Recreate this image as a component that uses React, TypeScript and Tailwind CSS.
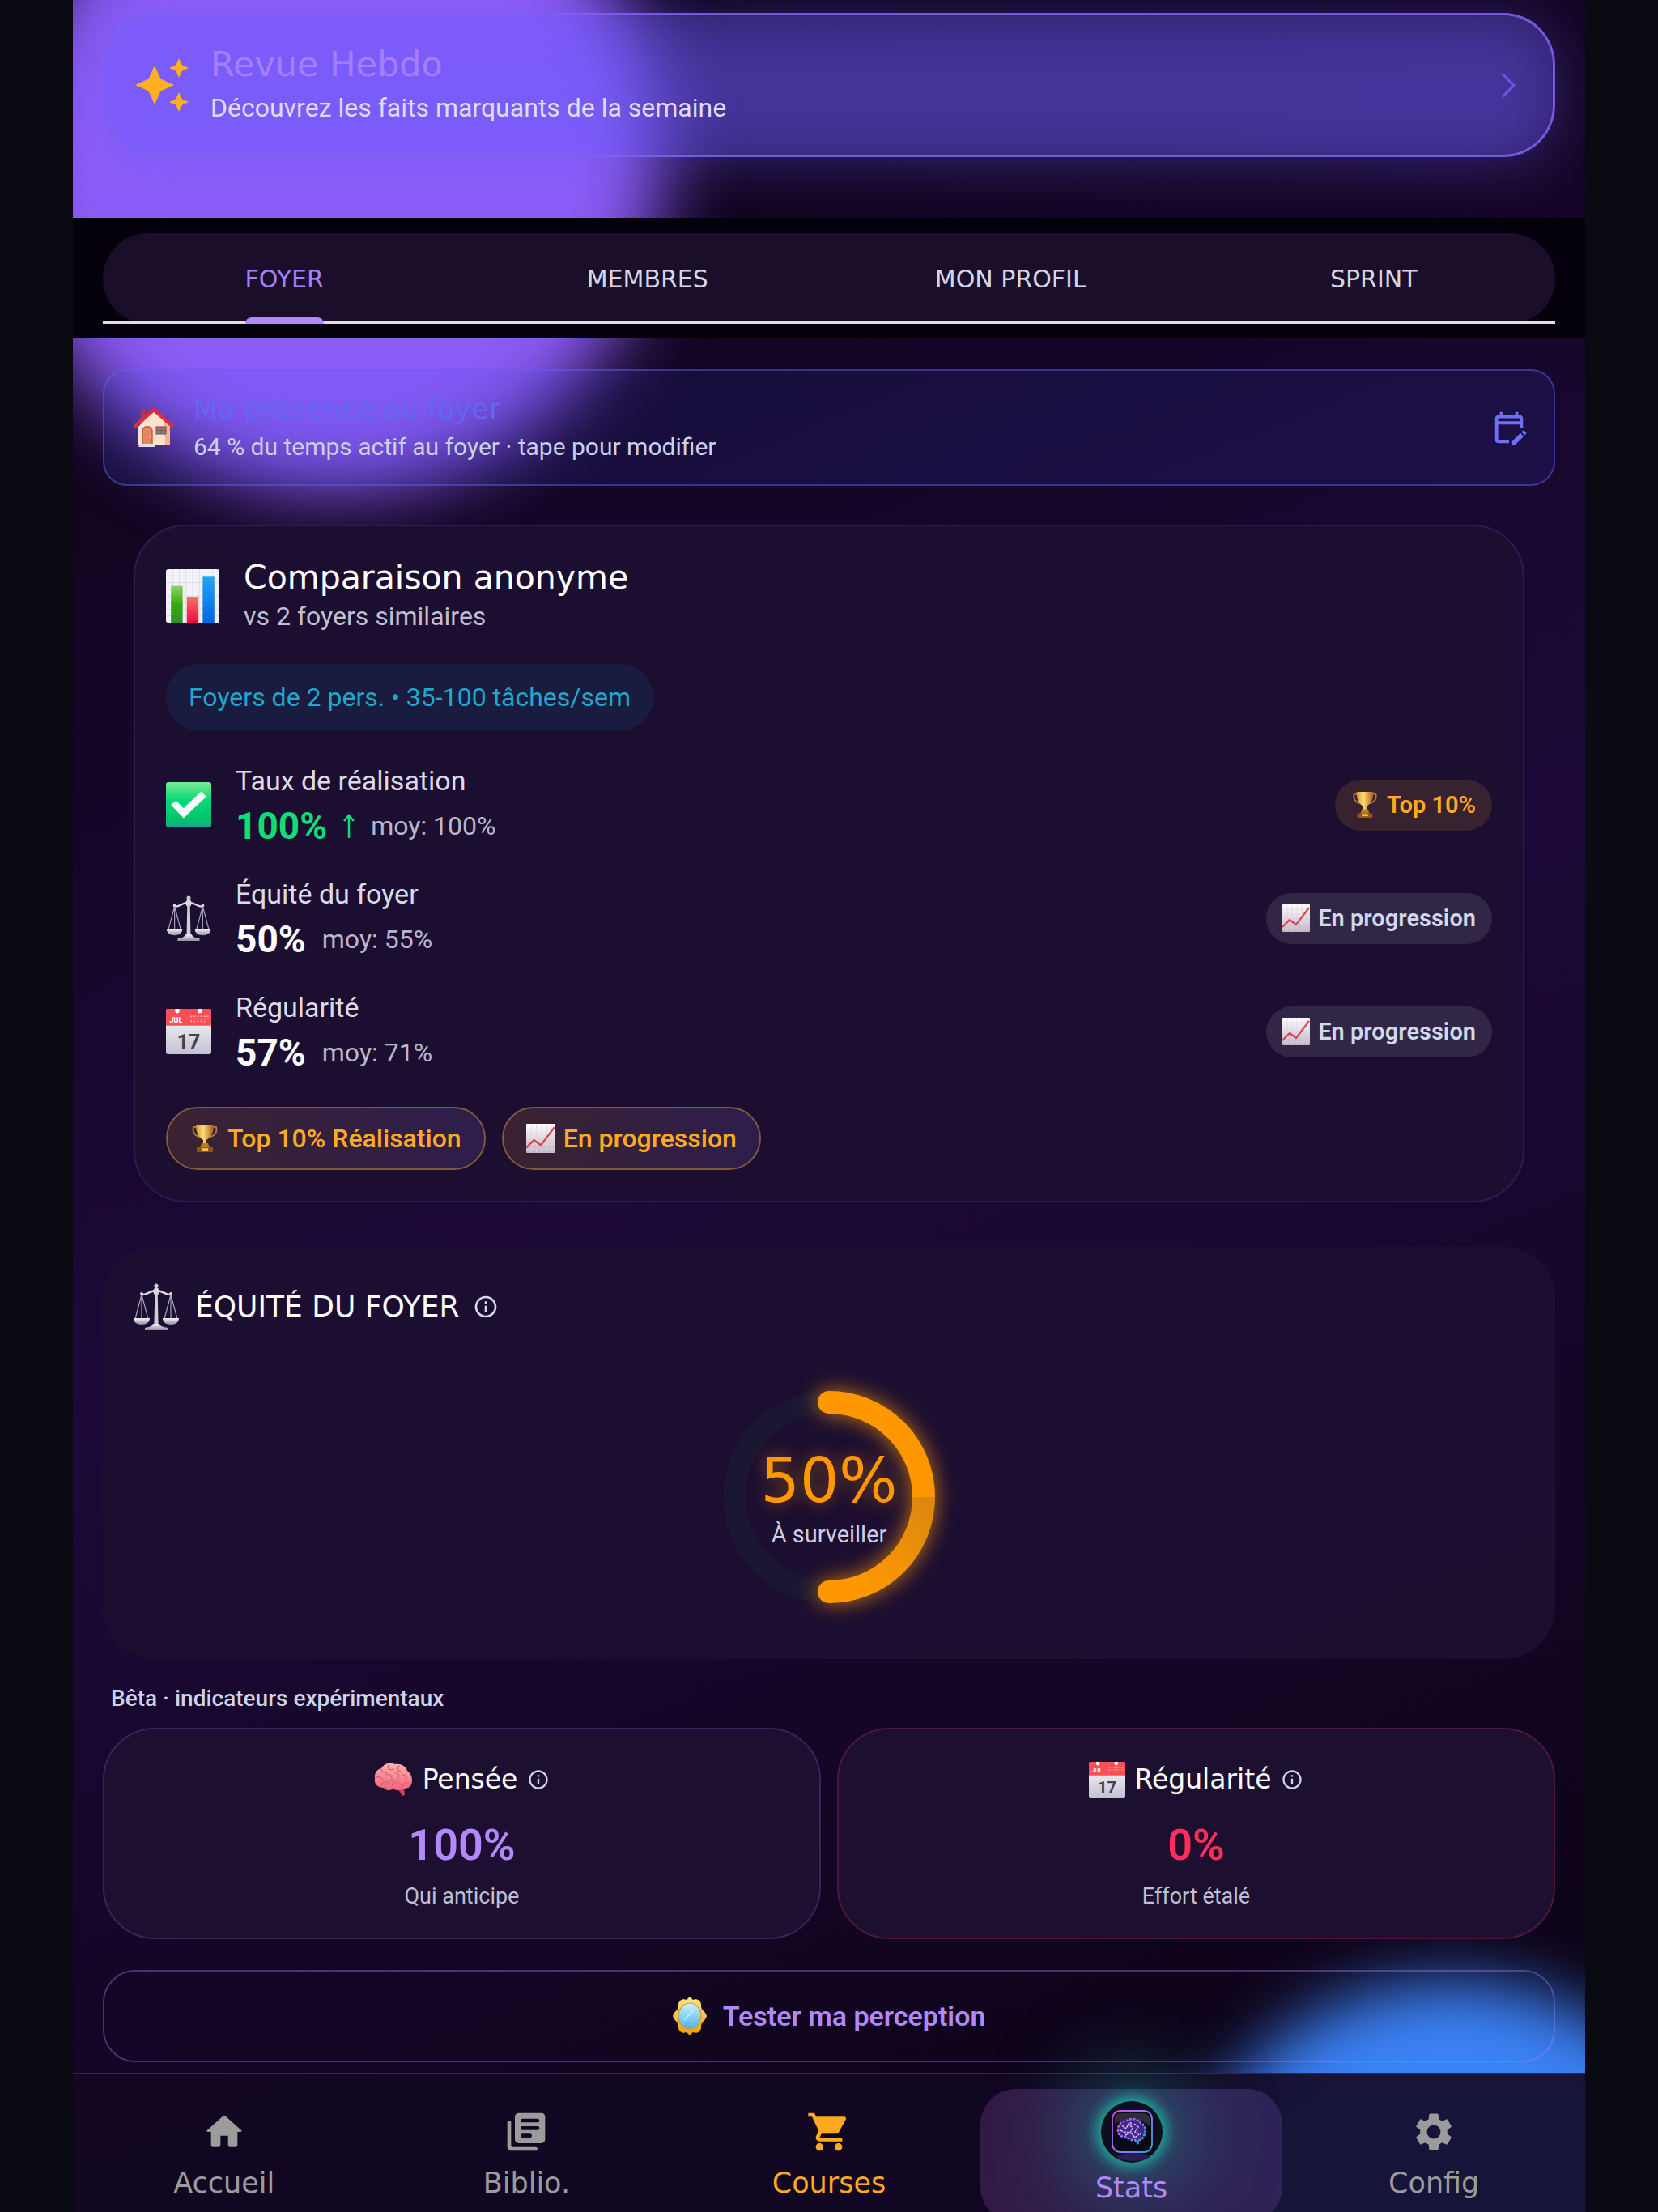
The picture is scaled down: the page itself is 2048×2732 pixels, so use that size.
import React from 'react';
import { MdAutoAwesome, MdInfoOutline, MdOutlineEditCalendar, MdSettings, MdShoppingCart } from 'react-icons/md';
import { ChevronRight } from 'lucide-react';

const display = "font-['DejaVu_Sans',sans-serif]";

type IconProps = { className?: string };

const ChartIcon = ({ className }: IconProps) => (
  <svg viewBox="0 0 64 64" className={className} aria-hidden="true">
    <defs>
      <linearGradient id="chartGreen" x1="0" y1="0" x2="0" y2="1">
        <stop offset="0" stopColor="#8ad46e" /><stop offset=".5" stopColor="#35ab0c" /><stop offset="1" stopColor="#2e8f2a" />
      </linearGradient>
      <linearGradient id="chartRed" x1="0" y1="0" x2="0" y2="1">
        <stop offset="0" stopColor="#ff6c6c" /><stop offset="1" stopColor="#ec0a3e" />
      </linearGradient>
      <linearGradient id="chartBlue" x1="0" y1="0" x2="0" y2="1">
        <stop offset="0" stopColor="#27a4f2" /><stop offset="1" stopColor="#0565e0" />
      </linearGradient>
    </defs>
    <rect width="64" height="64" rx="3" fill="#f3f3f7" />
    <path d="M8 0v64M16 0v64M24 0v64M32 0v64M40 0v64M48 0v64M56 0v64M0 8h64M0 16h64M0 24h64M0 32h64M0 40h64M0 48h64M0 56h64" stroke="#dddde6" strokeWidth="1" />
    <rect x="6" y="20" width="14" height="44" fill="url(#chartGreen)" />
    <rect x="25" y="33" width="14" height="31" fill="url(#chartRed)" />
    <rect x="44" y="9" width="14" height="55" fill="url(#chartBlue)" />
  </svg>
);

const CheckIcon = ({ className }: IconProps) => (
  <svg viewBox="0 0 54 54" className={className} aria-hidden="true">
    <defs>
      <linearGradient id="checkBg" x1="0" y1="0" x2="0" y2="1">
        <stop offset="0" stopColor="#7bea93" /><stop offset=".4" stopColor="#06d978" /><stop offset=".85" stopColor="#04c168" /><stop offset="1" stopColor="#15a79a" />
      </linearGradient>
    </defs>
    <rect width="54" height="54" rx="3" fill="url(#checkBg)" />
    <path d="M6 27l6-5 9 9 21-20 6 6-27 26z" fill="#fff" />
  </svg>
);

const ScalesIcon = ({ className }: IconProps) => (
  <svg viewBox="0 0 56 58" className={className} aria-hidden="true">
    <defs>
      <linearGradient id="steel" x1="0" y1="0" x2="0" y2="1">
        <stop offset="0" stopColor="#f4f4f9" /><stop offset="1" stopColor="#8f8ba3" />
      </linearGradient>
    </defs>
    <circle cx="28" cy="3" r="2.6" fill="#c9c8d6" />
    <ellipse cx="28" cy="10" rx="3.6" ry="5" fill="#d6d5e0" />
    <path d="M26.4 8h3.2l1 43h-5.2z" fill="#cfcedb" />
    <path d="M10 14c7 1 9-5 18-5s11 6 18 5" fill="none" stroke="#d9d8e4" strokeWidth="2.4" />
    <circle cx="10" cy="13" r="2" fill="#d9d8e4" />
    <circle cx="46" cy="13" r="2" fill="#d9d8e4" />
    <path d="M10 14L2 44M10 14v30M10 14l8 30M46 14l-8 30M46 14v30M46 14l8 30" stroke="#a5a3b6" strokeWidth="1.2" />
    <path d="M0 43h20c0 5-4 8-10 8s-10-3-10-8zM36 43h20c0 5-4 8-10 8s-10-3-10-8z" fill="url(#steel)" />
    <path d="M24 50h8c1 3 4 4 10 5v3H14v-3c6-1 9-2 10-5z" fill="url(#steel)" />
  </svg>
);

const CalendarIcon = ({ className }: IconProps) => (
  <svg viewBox="0 0 54 54" className={className} aria-hidden="true">
    <defs>
      <linearGradient id="calPaper" x1="0" y1="0" x2="0" y2="1">
        <stop offset="0" stopColor="#fff" /><stop offset="1" stopColor="#c3c0d2" />
      </linearGradient>
    </defs>
    <rect width="54" height="54" rx="3" fill="url(#calPaper)" />
    <path d="M3 0h8v3c0 3 5 3 5 0V0h22v3c0 3 5 3 5 0V0h8c2 0 3 1 3 3v17H0V3c0-2 1-3 3-3z" fill="#fb4f58" />
    <path d="M29 9h22M29 12h22M29 15h19" stroke="#ffb3b3" strokeWidth="1.4" strokeDasharray="2 2" />
    <text x="4" y="16" fontSize="9" fontWeight="700" fontFamily="Roboto, sans-serif" fill="#fff">JUL</text>
    <text x="27" y="47" fontSize="24" fontWeight="700" fontFamily="Roboto, sans-serif" fill="#45424c" textAnchor="middle">17</text>
  </svg>
);

const HouseIcon = ({ className }: IconProps) => (
  <svg viewBox="0 0 50 50" className={className} aria-hidden="true">
    <path d="M9 4h5v11l-5 4z" fill="#d52b33" />
    <path d="M25 4l20 20v23H6V24z" fill="#fde3cc" />
    <path d="M38 18l7 7v22h-6z" fill="#f3b58f" />
    <path d="M25 0L0 22l2 4L25 6l23 20 2-4z" fill="#dc2f3b" />
    <path d="M11 46V29c0-7 12-7 12 0v17z" fill="#e58662" stroke="#c25e4a" strokeWidth="1.5" />
    <circle cx="20.5" cy="36" r="1.2" fill="#fbd28a" />
    <rect x="28" y="24" width="12" height="9" fill="#4296ac" stroke="#a6543f" strokeWidth="1.2" />
    <path d="M34 24v9M28 28.5h12" stroke="#a6543f" />
    <path d="M8 45h18v4H6z" fill="#e3dfe6" />
  </svg>
);

const TrophyIcon = ({ className }: IconProps) => (
  <svg viewBox="0 0 34 36" className={className} aria-hidden="true">
    <defs>
      <linearGradient id="gold" x1="0" y1="0" x2="1" y2="0">
        <stop offset="0" stopColor="#d98a1c" /><stop offset=".4" stopColor="#ffe07a" /><stop offset="1" stopColor="#a85c12" />
      </linearGradient>
    </defs>
    <path d="M7 4H3c-2 6 2 11 8 12M27 4h4c2 6-2 11-8 12" fill="none" stroke="#a0784a" strokeWidth="2" />
    <path d="M6 1h22c0 11-4 16-9 19v5h-4v-5C10 17 6 12 6 1z" fill="url(#gold)" />
    <path d="M13 24h8l2 6H11z" fill="#c07a1b" />
    <rect x="7" y="29" width="20" height="6" rx="1" fill="#8f5418" />
    <rect x="13" y="30" width="8" height="3" fill="#f0c34c" />
  </svg>
);

const TrendIcon = ({ className }: IconProps) => (
  <svg viewBox="0 0 34 34" className={className} aria-hidden="true">
    <defs>
      <linearGradient id="trendPaper" x1="0" y1="0" x2="0" y2="1">
        <stop offset="0" stopColor="#fff" /><stop offset="1" stopColor="#beb5c4" />
      </linearGradient>
    </defs>
    <rect width="34" height="34" rx="1" fill="url(#trendPaper)" />
    <path d="M6 0v34M12 0v34M18 0v34M24 0v34M30 0v34M0 6h34M0 12h34M0 18h34M0 24h34M0 30h34" stroke="#ddd3dc" strokeWidth=".6" />
    <path d="M0 28l9-9 8 6L33 4" fill="none" stroke="#df4150" strokeWidth="2.2" />
  </svg>
);

const BrainIcon = ({ className }: IconProps) => (
  <svg viewBox="0 0 48 42" className={className} aria-hidden="true">
    <defs>
      <linearGradient id="brainPink" x1="0" y1="0" x2="0" y2="1">
        <stop offset="0" stopColor="#ffb0ae" /><stop offset="1" stopColor="#f0647c" />
      </linearGradient>
    </defs>
    <path d="M28 30l7 11 3-1-1-10z" fill="#d93c55" />
    <path d="M47 22c0 8-5 10-11 10-3 3-9 3-12 0-4 3-9 3-12-1C4 31 0 26 1 20 0 13 4 8 9 7c4-7 12-8 17-5 7-1 13 2 15 8 4 3 6 7 6 12z" fill="url(#brainPink)" />
    <path d="M9 8c1 4 4 5 7 4M18 3c-2 5 2 7 6 5M31 4c-3 3-2 6 2 7M2 19c4-3 8-1 9 3M14 15c4-2 8 0 8 5M26 12c4 0 6 4 4 8M35 15c5 0 6 5 4 8M9 28c1-4 5-5 9-3M23 30c-1-5 3-7 8-5M35 30c0-4 4-6 8-4M26 21c-3 3-7 2-9 0" fill="none" stroke="#e0657a" strokeWidth="1.5" strokeLinecap="round" />
  </svg>
);

const MirrorIcon = ({ className }: IconProps) => (
  <svg viewBox="0 0 42 48" className={className} aria-hidden="true">
    <defs>
      <linearGradient id="frameGold" x1="0" y1="0" x2="0" y2="1">
        <stop offset="0" stopColor="#ffe58a" /><stop offset="1" stopColor="#f59a0a" />
      </linearGradient>
      <linearGradient id="mirrorGlass" x1="0" y1="0" x2="0" y2="1">
        <stop offset="0" stopColor="#c6f4fb" /><stop offset="1" stopColor="#4fb0f5" />
      </linearGradient>
    </defs>
    <path d="M21 0l4 4c4-2 9 0 10 5 0 3 0 6 2 8 2 1 4 4 5 7-1 3-3 6-5 7-2 2-2 5-2 8-1 5-6 7-10 5l-4 4-4-4c-4 2-9 0-10-5 0-3 0-6-2-8-2-1-4-4-5-7 1-3 3-6 5-7 2-2 2-5 2-8 1-5 6-7 10-5z" fill="url(#frameGold)" />
    <ellipse cx="21" cy="24" rx="14" ry="16" fill="url(#mirrorGlass)" stroke="#dd9a16" strokeWidth="1.2" />
    <path d="M14 29l12-13" stroke="#e6fbff" strokeWidth="2" opacity=".5" />
  </svg>
);

const HomeIcon = ({ className }: IconProps) => (
  <svg viewBox="0 0 24 24" fill="currentColor" className={className} aria-hidden="true">
    <path d="M10 19v-5h4v5c0 .55.45 1 1 1h3c.55 0 1-.45 1-1v-7h1.7c.46 0 .68-.57.33-.87L12.67 3.6c-.38-.34-.96-.34-1.34 0l-8.36 7.53c-.34.3-.13.87.33.87H5v7c0 .55.45 1 1 1h3c.55 0 1-.45 1-1z" />
  </svg>
);

const LibraryIcon = ({ className }: IconProps) => (
  <svg viewBox="0 0 24 24" fill="currentColor" className={className} aria-hidden="true">
    <path d="M3 6c-.55 0-1 .45-1 1v13c0 1.1.9 2 2 2h13c.55 0 1-.45 1-1s-.45-1-1-1H5c-.55 0-1-.45-1-1V7c0-.55-.45-1-1-1zm17-4H8c-1.1 0-2 .9-2 2v12c0 1.1.9 2 2 2h12c1.1 0 2-.9 2-2V4c0-1.1-.9-2-2-2zm-2 9h-8c-.55 0-1-.45-1-1s.45-1 1-1h8c.55 0 1 .45 1 1s-.45 1-1 1zm-4 4h-4c-.55 0-1-.45-1-1s.45-1 1-1h4c.55 0 1 .45 1 1s-.45 1-1 1zm4-8h-8c-.55 0-1-.45-1-1s.45-1 1-1h8c.55 0 1 .45 1 1s-.45 1-1 1z" />
  </svg>
);

const StatsAvatar = () => (
  <span className="block size-[76px] rounded-full bg-[#0d0f1c] shadow-[0_0_16px_6px_#1fa99c,0_0_110px_24px_rgba(31,160,155,0.65)]">
    <svg viewBox="0 0 76 76" className="size-full" aria-hidden="true">
      <defs>
        <linearGradient id="neon" x1="0" y1="0" x2="1" y2="1">
          <stop offset="0" stopColor="#d14ae0" /><stop offset=".5" stopColor="#8f7bff" /><stop offset="1" stopColor="#2fa3e8" />
        </linearGradient>
      </defs>
      <ellipse cx="40" cy="69" rx="20" ry="5" fill="#3b2270" opacity=".7" />
      <rect x="14" y="12" width="49" height="51" rx="10" fill="#0a0916" stroke="url(#neon)" strokeWidth="1.8" />
      <path d="M17 20c1-4 4-5 8-5h26c5 0 8 2 9 6v10C46 20 32 20 17 28z" fill="#2c2b38" />
      <path d="M21 37c-1-8 5-13 11-13 6-4 14-2 17 3 5 2 7 8 5 13-1 6-5 9-9 8l1 5-4-5c-7 1-9-3-13-4-5 0-8-3-8-7z" fill="#3b2a86" />
      <path d="M21 37c-1-8 5-13 11-13 6-4 14-2 17 3 5 2 7 8 5 13-1 6-5 9-9 8l1 5-4-5c-7 1-9-3-13-4-5 0-8-3-8-7z" fill="none" stroke="url(#neon)" strokeWidth="2.5" strokeDasharray="3 1.5" />
      <path d="M26 30l5 4 3-6 5 5-3 6-8-1M41 28l5 4-4 6 7 3M30 42l7-3 5 6 5-4M36 26l2 3M24 36l4 2" fill="none" stroke="#e7aaff" strokeWidth="1.6" strokeDasharray="3 1" />
    </svg>
  </span>
);

const tabs = [
  { label: 'FOYER', active: true },
  { label: 'MEMBRES', active: false },
  { label: 'MON PROFIL', active: false },
  { label: 'SPRINT', active: false },
];

const metrics = [
  { icon: <CheckIcon className="size-14" />, label: 'Taux de réalisation', value: '100%', up: true, avg: 'moy: 100%', badge: 'Top 10%', top: true },
  { icon: <ScalesIcon className="size-14" />, label: 'Équité du foyer', value: '50%', up: false, avg: 'moy: 55%', badge: 'En progression', top: false },
  { icon: <CalendarIcon className="size-14" />, label: 'Régularité', value: '57%', up: false, avg: 'moy: 71%', badge: 'En progression', top: false },
];

const indicators = [
  {
    icon: <BrainIcon className="w-12 h-[42px]" />,
    title: 'Pensée',
    value: '100%',
    desc: 'Qui anticipe',
    border: 'border-[#35265c]',
    color: 'text-[#b388ff]',
  },
  {
    icon: <CalendarIcon className="size-[45px]" />,
    title: 'Régularité',
    value: '0%',
    desc: 'Effort étalé',
    border: 'border-[#4c183c]',
    color: 'text-[#ff2d5c]',
  },
];

const navItems = [
  { label: 'Accueil', icon: <HomeIcon className="size-14" />, color: 'text-[#9b9b9b]' },
  { label: 'Biblio.', icon: <LibraryIcon className="size-14" />, color: 'text-[#9b9b9b]' },
  { label: 'Courses', icon: <MdShoppingCart className="size-14" />, color: 'text-[#ffa91f]' },
  { label: 'Stats', icon: <StatsAvatar />, color: 'text-[#b388ff]', active: true },
  { label: 'Config', icon: <MdSettings className="size-14" />, color: 'text-[#9b9b9b]' },
];

const WeeklyReview = () => (
  <div className="relative mx-[37px] mt-4">
    {/* Halo behind the translucent card */}
    <div className="absolute inset-x-0 top-2 -bottom-2 rounded-[64px] bg-[#6a5cff]/35 blur-[34px]" />
    <button type="button" className="relative w-full flex items-center gap-6 rounded-[64px] border-[3px] border-[#7c62ee]/85 bg-[#6f5cff]/30 pl-[34px] pr-7 py-8 text-left">
      <MdAutoAwesome className="size-[72px] text-[#ffb020]" />
      <span className="flex-1">
        <span className={`${display} block text-[43px] leading-[56px] text-[#a67dfb]`}>Revue Hebdo</span>
        <span className="block text-[32px] leading-[52px] text-[#dedcf8]">Découvrez les faits marquants de la semaine</span>
      </span>
      <ChevronRight className="size-[53px] text-[#6c58e0]" strokeWidth={1.4} />
    </button>
  </div>
);

const TabBar = () => (
  <div className="relative mt-[75px] bg-[#04010d] px-[37px] pt-[19px] pb-[18px]">
    <div role="tablist" className="relative grid grid-cols-4 h-28 rounded-[56px] bg-[#1a0e2b]">
      <div className="absolute inset-x-0 bottom-0 h-[3px] bg-[#e6dce6]" />
      {tabs.map((tab) => (
        <button
          key={tab.label}
          type="button"
          role="tab"
          aria-selected={tab.active}
          className={`${display} relative flex justify-center text-[30px] ${tab.active ? 'text-[#a97ff5]' : 'text-[#d3d8e6]'}`}
        >
          <span className="relative flex h-full items-center">
            {tab.label}
            {tab.active && <span className="absolute inset-x-0 bottom-0 h-2 rounded-t-lg bg-[#b388ff]" />}
          </span>
        </button>
      ))}
    </div>
  </div>
);

const Presence = () => (
  <button type="button" className="relative mx-[37px] mt-[38px] flex items-center gap-6 rounded-[30px] border-2 border-[#6366f1]/45 bg-[#3c46f0]/12 pl-9 pr-8 py-[23px] text-left">
    <HouseIcon className="size-[50px]" />
    <span className="flex-1">
      <span className={`${display} block text-[35px] leading-[48px] text-[#6366f1]`}>Ma présence au foyer</span>
      <span className="block text-[30px] leading-[46px] text-[#cdcfe8]">64 % du temps actif au foyer · tape pour modifier</span>
    </span>
    <MdOutlineEditCalendar className="size-[46px] text-[#6f6ff5]" />
  </button>
);

const Comparison = () => (
  <section className="relative mx-[75px] mt-12 rounded-[64px] border-2 border-[#2a1d52] bg-[#1c0f30]/95 p-[38px]">
    <div className="flex items-center gap-[30px]">
      <ChartIcon className="size-[66px]" />
      <div>
        <h2 className={`${display} text-[41px] leading-[50px] text-white`}>Comparaison anonyme</h2>
        <p className="text-[32px] leading-[46px] text-[#c0bed3]">vs 2 foyers similaires</p>
      </div>
    </div>

    <p className="mt-9 w-fit rounded-[40px] bg-[#191c3e] px-7 py-[18px] text-[32px] leading-[46px] text-[#1fa9cd]">
      Foyers de 2 pers. • 35-100 tâches/sem
    </p>

    <ul className="mt-9 flex flex-col gap-7">
      {metrics.map((metric) => (
        <li key={metric.label} className="flex items-center gap-[30px]">
          {metric.icon}
          <div className="flex-1">
            <p className="text-[34px] leading-[52px] text-[#dcdaea]">{metric.label}</p>
            <p className="flex items-center gap-5 text-[32px] leading-[60px] text-[#b9b7cf]">
              <span className={`text-[46px] font-bold ${metric.up ? 'text-[#10dd78]' : 'text-white'}`}>{metric.value}</span>
              {metric.up && (
                <svg viewBox="0 0 14 30" className="h-[30px] w-[14px]" fill="none" stroke="#10dd78" strokeWidth="2.5" aria-hidden="true">
                  <path d="M7 30V2M1 9l6-7 6 7" />
                </svg>
              )}
              <span>{metric.avg}</span>
            </p>
          </div>
          <span className={`flex items-center gap-2.5 rounded-full px-5 py-3 text-[29px] leading-[39px] font-semibold ${metric.top ? 'bg-[#382230] text-[#ffab1f]' : 'bg-[#312646] text-[#d2d7ea]'}`}>
            {metric.top ? <TrophyIcon className="size-[34px]" /> : <TrendIcon className="size-[34px]" />}
            {metric.badge}
          </span>
        </li>
      ))}
    </ul>

    <div className="mt-[37px] flex gap-5">
      <span className="flex items-center gap-2.5 rounded-[39px] border-2 border-[#805a3c] bg-linear-to-r from-[#3a2230] to-[#2e1c4c] px-7 py-4 text-[32px] leading-[42px] font-medium text-[#ffab1f]">
        <TrophyIcon className="size-9" />
        Top 10% Réalisation
      </span>
      <span className="flex items-center gap-2.5 rounded-[39px] border-2 border-[#805a3c] bg-linear-to-r from-[#3a2230] to-[#2e1c4c] px-7 py-4 text-[32px] leading-[42px] font-medium text-[#ffab1f]">
        <TrendIcon className="size-9" />
        En progression
      </span>
    </div>
  </section>
);

const Equity = () => (
  <section className="relative mx-[37px] mt-[55px] rounded-[64px] bg-[#1c0f30]/95 px-[38px] pt-9 pb-10">
    <div className="flex h-[76px] items-center">
      <ScalesIcon className="w-14 h-[58px]" />
      <h2 className={`${display} ml-5 text-[36px] text-white`}>ÉQUITÉ DU FOYER</h2>
      <button type="button" aria-label="Infos équité" className="ml-4 text-[#d5d8ee]">
        <MdInfoOutline className="size-8" />
      </button>
    </div>
    <div className="relative mx-auto mt-[37px] size-80">
      <svg viewBox="0 0 320 320" className="size-full overflow-visible" fill="none" strokeWidth="28" aria-hidden="true">
        <defs>
          <linearGradient id="lowerArc" x1="1" y1="0" x2="0" y2="1">
            <stop offset="0" stopColor="#dc8810" /><stop offset=".8" stopColor="#ff9800" />
          </linearGradient>
          <filter id="arcGlow" x="-60%" y="-30%" width="220%" height="160%">
            <feGaussianBlur stdDeviation="13" />
          </filter>
        </defs>
        <circle cx="160" cy="160" r="117" stroke="#1b1733" />
        <path d="M160 43a117 117 0 0 1 0 234" stroke="#ff9800" strokeLinecap="round" opacity=".75" filter="url(#arcGlow)" />
        <path d="M160 277a117 117 0 0 0 117-117" stroke="url(#lowerArc)" />
        <path d="M160 43a117 117 0 0 1 117 117" stroke="#ff9800" />
        <path d="M160 29a14 14 0 0 0 0 28zM160 263a14 14 0 0 0 0 28z" fill="#ff9800" stroke="none" />
      </svg>
      <div className="absolute inset-0 flex flex-col items-center justify-center gap-2 pt-2">
        <span className={`${display} text-[76px] leading-[76px] text-[#ff9800] [text-shadow:0_0_20px_rgba(255,152,0,0.5)]`}>50%</span>
        <span className="text-[29px] leading-[40px] text-[#cfcde4]">À surveiller</span>
      </div>
    </div>
  </section>
);

const BottomNav = () => (
  <nav className="relative grid h-[172px] shrink-0 grid-cols-5 border-t-2 border-[#31244f] bg-[#130823]/90 pt-[18px]">
    {navItems.map((item) => (
      <a
        key={item.label}
        href={`#${item.label}`}
        className={`${display} flex h-[165px] flex-col items-center rounded-[44px] text-[35px] leading-10 ${item.color} ${item.active ? 'gap-[11px] pt-[15px] bg-linear-to-r from-[#321a47] to-[#2f2457]' : 'gap-[15px] pt-[25px]'}`}
      >
        {item.icon}
        <span className="relative">{item.label}</span>
      </a>
    ))}
  </nav>
);

export default function App() {
  return (
    <div className="h-screen overflow-hidden bg-[#0a0a12] px-[90px] font-[Roboto,sans-serif]">
      <div className="relative flex h-full flex-col overflow-hidden bg-[linear-gradient(158deg,#0d041b_0%,#120521_18%,#1c0938_50%,#120521_80%,#08020f_100%)]">
        {/* Ambient glows */}
        <div className="absolute -top-[204px] -left-[84px] size-[810px] rounded-full bg-[#8b5cf6] blur-[46px]" />
        <div className="absolute -bottom-[416px] right-[-186px] size-[700px] rounded-full bg-[#3b82f6] blur-[40px]" />

        <main className="relative flex min-h-0 flex-1 flex-col">
          <WeeklyReview />
          <TabBar />
          <Presence />
          <Comparison />
          <Equity />

          <h3 className="mx-[47px] mt-[29px] text-[28px] leading-10 font-medium text-[#cfd3e6]">Bêta · indicateurs expérimentaux</h3>
          <div className="mx-[37px] mt-4 grid grid-cols-2 gap-5">
            {indicators.map((item) => (
              <section key={item.title} className={`flex flex-col items-center rounded-[64px] border-2 bg-[#1c0f30] pt-9 pb-[31px] ${item.border}`}>
                <div className="flex h-[52px] items-center gap-3">
                  {item.icon}
                  <h4 className={`${display} text-[33px] text-white`}>{item.title}</h4>
                  <button type="button" aria-label={`Infos ${item.title}`} className="text-[#cfd3e6]">
                    <MdInfoOutline className="size-7" />
                  </button>
                </div>
                <p className={`mt-[19px] text-[54px] leading-[72px] font-semibold ${item.color}`}>{item.value}</p>
                <p className="mt-[7px] text-[27px] leading-10 text-[#c0bed3]">{item.desc}</p>
              </section>
            ))}
          </div>

          <button type="button" className="mx-[37px] mt-[38px] flex h-[114px] shrink-0 items-center justify-center gap-5 rounded-[40px] border-2 border-[#b388ff]/35 text-[34px] font-semibold text-[#b388ff]">
            <MirrorIcon className="w-[42px] h-12" />
            Tester ma perception
          </button>
        </main>

        <BottomNav />
      </div>
    </div>
  );
}
